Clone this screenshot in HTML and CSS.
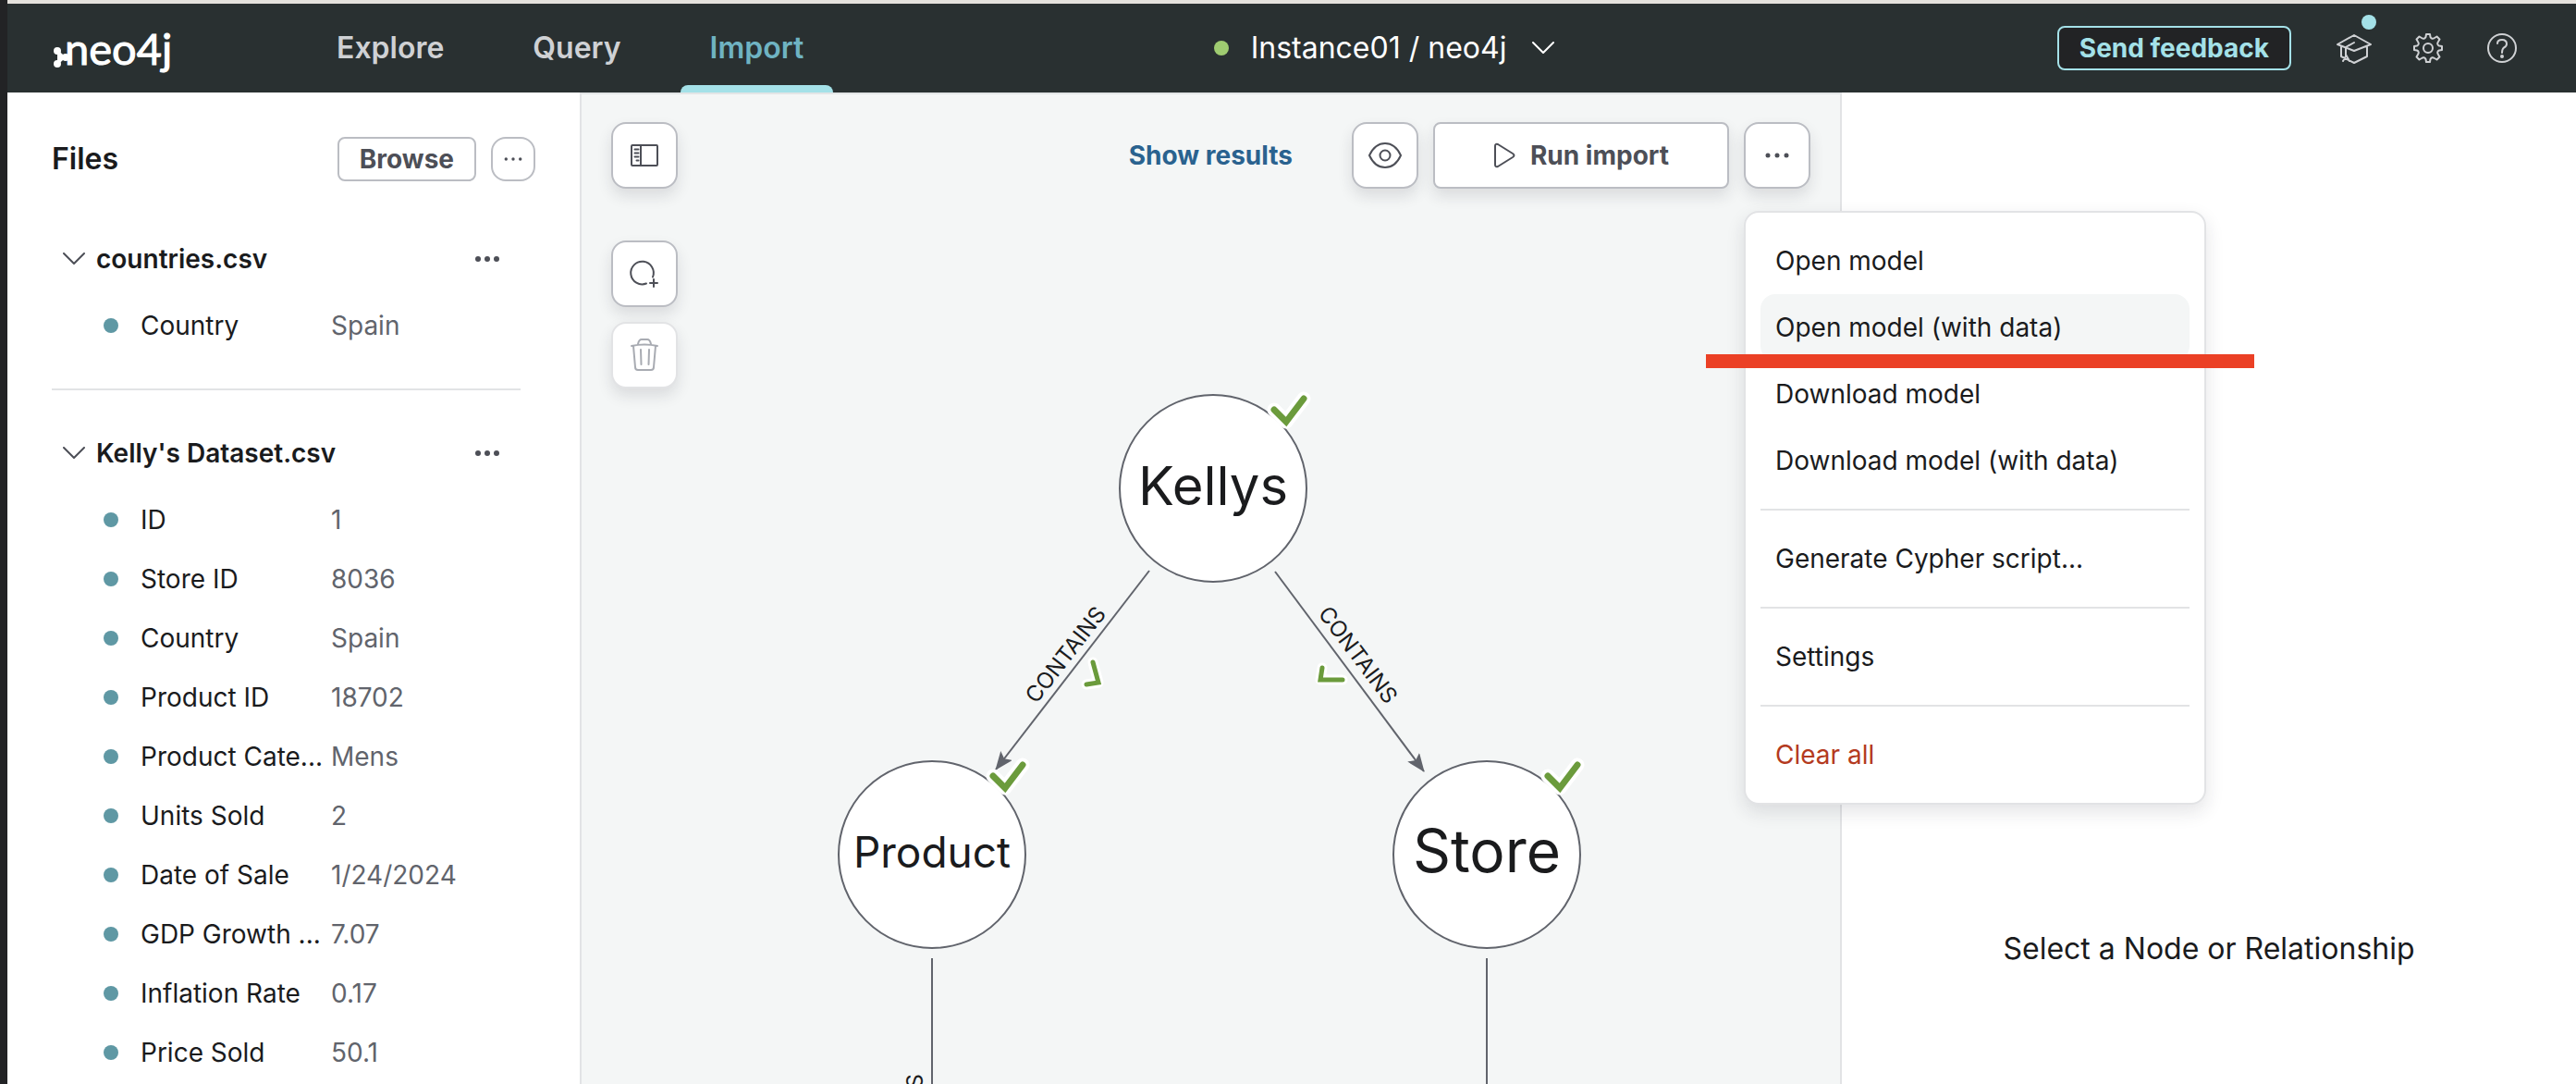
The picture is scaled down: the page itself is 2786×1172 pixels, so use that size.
FILE: index.html
```html
<!DOCTYPE html>
<html lang="en">
<head>
<meta charset="utf-8">
<title>neo4j Import</title>
<link rel="stylesheet" href="styles.css">
</head>
<body>
<header class="topbar">
  <a class="logo" href="#" aria-label="neo4j">
    <svg class="logo-mark" viewBox="0 0 20 64" aria-hidden="true"><path d="M6 35L14 42L6 49" /><circle cx="6" cy="35" r="3"/><circle cx="15" cy="42" r="3"/><circle cx="6" cy="49" r="3"/></svg>
    <span class="logo-text">neo4j</span>
  </a>
  <nav class="tabs">
    <a class="tab" href="#">Explore</a>
    <a class="tab" href="#">Query</a>
    <a class="tab tab-active" href="#" aria-current="page">Import</a>
  </nav>
  <button class="instance" type="button">
    <span class="status-dot"></span>
    <span>Instance01 / neo4j</span>
    <svg class="chevron" viewBox="0 0 24 14" aria-hidden="true"><path d="M1 1L12 12L23 1"/></svg>
  </button>
  <div class="tools">
    <button class="feedback" type="button">Send feedback</button>
    <button class="tool" type="button" aria-label="Learn">
      <svg viewBox="0 0 40 40" aria-hidden="true"><path d="M2 16L20 6L38 16L20 23ZM6 18L6 29L20 36L34 29L34 18M20 14L11 19L11 29L8 34M11 27L15 34"/></svg>
      <span class="badge"></span>
    </button>
    <button class="tool" type="button" aria-label="Settings">
      <svg viewBox="0 0 40 40" aria-hidden="true"><circle cx="20" cy="20" r="5"/><path d="M17.500 8L18 5L22 5L22.500 8Q24 11 27 9L29.500 7.500L32.500 10.500L31 13Q29 16 32 17.500L35 18L35 22L32 22.500Q29 24 31 27L32.500 29.500L29.500 32.500L27 31Q24 29 22.500 32L22 35L18 35L17.500 32Q16 29 13 31L10.500 32.500L7.500 29.500L9 27Q11 24 8 22.500L5 22L5 18L8 17.500Q11 16 9 13L7.500 10.500L10.500 7.500L13 9Q16 11 17.500 8Z"/></svg>
    </button>
    <button class="tool" type="button" aria-label="Help">
      <svg viewBox="0 0 40 40" aria-hidden="true"><circle cx="20" cy="20" r="15"/><path d="M15 15Q15 11 20 11Q25 11 25 15.500Q25 18 22 19.500Q20 21 20 25"/><circle class="fill" cx="20" cy="29" r="1"/></svg>
    </button>
  </div>
</header>

<div class="workspace">
  <aside class="files">
    <div class="files-head">
      <h1 class="files-title">Files</h1>
      <button class="btn btn-small" type="button">Browse</button>
      <button class="btn btn-dots" type="button" aria-label="More file actions"><svg class="dots dots-small" viewBox="0 0 28 8" aria-hidden="true"><circle cx="5" cy="4" r="2"/><circle cx="14" cy="4" r="2"/><circle cx="23" cy="4" r="2"/></svg></button>
    </div>
    <div class="file-list">
      <section class="file">
        <div class="file-head">
          <svg class="chevron" viewBox="0 0 24 14" aria-hidden="true"><path d="M1 1L12 12L23 1"/></svg>
          <h2 class="file-name">countries.csv</h2>
          <button class="plain" type="button" aria-label="File actions"><svg class="dots" viewBox="0 0 28 8" aria-hidden="true"><circle cx="4" cy="4" r="3"/><circle cx="14" cy="4" r="3"/><circle cx="24" cy="4" r="3"/></svg></button>
        </div>
        <dl class="fields">
          <div class="field"><dt>Country</dt><dd>Spain</dd></div>
        </dl>
      </section>
      <section class="file">
        <div class="file-head">
          <svg class="chevron" viewBox="0 0 24 14" aria-hidden="true"><path d="M1 1L12 12L23 1"/></svg>
          <h2 class="file-name">Kelly's Dataset.csv</h2>
          <button class="plain" type="button" aria-label="File actions"><svg class="dots" viewBox="0 0 28 8" aria-hidden="true"><circle cx="4" cy="4" r="3"/><circle cx="14" cy="4" r="3"/><circle cx="24" cy="4" r="3"/></svg></button>
        </div>
        <dl class="fields">
          <div class="field"><dt>ID</dt><dd>1</dd></div>
          <div class="field"><dt>Store ID</dt><dd>8036</dd></div>
          <div class="field"><dt>Country</dt><dd>Spain</dd></div>
          <div class="field"><dt>Product ID</dt><dd>18702</dd></div>
          <div class="field"><dt>Product Cate...</dt><dd>Mens</dd></div>
          <div class="field"><dt>Units Sold</dt><dd>2</dd></div>
          <div class="field"><dt>Date of Sale</dt><dd>1/24/2024</dd></div>
          <div class="field"><dt>GDP Growth ...</dt><dd>7.07</dd></div>
          <div class="field"><dt>Inflation Rate</dt><dd>0.17</dd></div>
          <div class="field"><dt>Price Sold</dt><dd>50.1</dd></div>
        </dl>
      </section>
    </div>
  </aside>

  <main class="canvas">
    <svg class="graph" role="img" aria-label="Graph model">
      <defs>
        <marker id="arrow" viewBox="0 0 20 16" refX="19" refY="8" markerWidth="20" markerHeight="16" markerUnits="userSpaceOnUse" orient="auto"><path class="arrow-head" d="M20 8L0 0L4 8L0 16Z"/></marker>
      </defs>
      <path class="edge" marker-end="url(#arrow)" d="M614 517L448 732"/>
      <path class="edge" marker-end="url(#arrow)" d="M750 518L911 734"/>
      <path class="edge" d="M379 936V1400M979 936V1400"/>
      <text class="edge-label" transform="translate(530 613) rotate(-52)">CONTAINS</text>
      <text class="edge-label" transform="translate(833 613) rotate(53)">CONTAINS</text>
      <text class="edge-label edge-label-end" transform="translate(369 1061) rotate(-90)">CONTAINS</text>
      <circle class="node" cx="683" cy="428" r="101"/>
      <circle class="node" cx="379" cy="824" r="101"/>
      <circle class="node" cx="979" cy="824" r="101"/>
      <text class="node-label size-m" x="683" y="446">Kellys</text>
      <text class="node-label size-s" x="379" y="838">Product</text>
      <text class="node-label size-l" x="979" y="843">Store</text>
      <path class="halo" d="M749 343L762 356L781 331M445 739L458 752L477 727M1045 739L1058 752L1077 727"/>
      <path class="check" d="M749 343L762 356L781 331M445 739L458 752L477 727M1045 739L1058 752L1077 727"/>
      <path class="halo halo-small" d="M553 616L559 638L546 640M801 622L799 635L823 635"/>
      <path class="check check-small" d="M553 616L559 638L546 640M801 622L799 635L823 635"/>
    </svg>
    <div class="canvas-tools">
      <button class="btn btn-icon" type="button" aria-label="Toggle files panel"><svg class="icon" viewBox="0 0 32 32" aria-hidden="true"><rect x="2" y="5" width="28" height="22" rx="1"/><path d="M12 5V27M5.500 9.500H9.500M5.500 13.500H9.500M5.500 17.500H9.500M7.500 21.500H9.500"/></svg></button>
      <div class="tool-group">
        <button class="btn btn-icon" type="button" aria-label="Add node"><svg class="icon" viewBox="0 0 32 32" aria-hidden="true"><path d="M18 26.500A12.300 12.300 0 1 1 25 19.500M26 22V30M22 26H30"/></svg></button>
        <button class="btn btn-icon btn-off" type="button" aria-label="Delete" disabled><svg class="icon" viewBox="0 0 32 32" aria-hidden="true"><path d="M2 6Q16 3 30 6M4 6L6 29Q6 32 9 32H23Q26 32 26 29L28 6M9 4Q10-1 13-1H19Q22-1 23 4M12 10L12.500 26M21 10L20.500 26"/></svg></button>
      </div>
    </div>
    <div class="actions">
      <a class="results" href="#">Show results</a>
      <button class="btn btn-icon" type="button" aria-label="Preview"><svg class="icon icon-wide" viewBox="0 0 36 32" aria-hidden="true"><path d="M1 16Q7 3 18 3T35 16Q29 29 18 29T1 16Z"/><circle cx="18" cy="16" r="5.500"/></svg></button>
      <button class="btn btn-run" type="button"><svg class="icon-play" viewBox="0 0 24 28" aria-hidden="true"><path d="M2 4Q2 1 5 2L21 12Q24 14 21 16L5 26Q2 27 2 24Z"/></svg>Run import</button>
      <div class="menu-anchor">
        <button class="btn btn-icon" type="button" aria-label="More actions" aria-expanded="true"><svg class="dots" viewBox="0 0 28 8" aria-hidden="true"><circle cx="4" cy="4" r="2.500"/><circle cx="14" cy="4" r="2.500"/><circle cx="24" cy="4" r="2.500"/></svg></button>
        <div class="menu">
          <button class="item" type="button">Open model</button>
          <button class="item item-hover" type="button">Open model (with data)</button>
          <button class="item" type="button">Download model</button>
          <button class="item" type="button">Download model (with data)</button>
          <hr class="rule">
          <button class="item" type="button">Generate Cypher script...</button>
          <hr class="rule">
          <button class="item" type="button">Settings</button>
          <hr class="rule">
          <button class="item item-danger" type="button">Clear all</button>
          <span class="marker-bar"></span>
        </div>
      </div>
    </div>
  </main>

  <aside class="details"><p class="hint">Select a Node or Relationship</p></aside>
</div>
</body>
</html>
```
FILE: styles.css
```css
* { box-sizing: border-box; }
body {
  margin: 0;
  display: flex;
  flex-direction: column;
  overflow: hidden;
  height: 100vh;
  border-left: 8px solid #222325;
  background: #fff;
  color: #1a1b1d;
  font: 400 28px/40px Inter, "Liberation Sans", sans-serif;
}
button { font: inherit; color: inherit; margin: 0; padding: 0; border: 0; background: none; cursor: pointer; }
a { text-decoration: none; color: inherit; }
h1, h2, p, dl, dt, dd { margin: 0; }
svg { display: block; fill: none; stroke: currentColor; stroke-width: 2; stroke-linecap: round; stroke-linejoin: round; }

/* Top bar */
.topbar {
  flex: none;
  height: 100px;
  border-top: 4px solid #e5e2dd;
  display: flex;
  align-items: center;
  padding: 0 60px 0 48px;
  background: #293031;
  color: #cfd1d4;
}
.logo { display: flex; align-items: center; width: 308px; color: #fff; }
.logo-mark { width: 20px; height: 64px; fill: currentColor; margin-right: -6px; }
.logo-text { font: 400 47px/64px Lato, sans-serif; -webkit-text-stroke: 1px currentColor; }
.tabs { display: flex; gap: 96px; }
.tab { position: relative; display: flex; align-items: center; height: 96px; font-size: 32px; font-weight: 600; }
.tab-active { color: #6fb3c2; }
.tab-active::after { content: ""; position: absolute; left: -32px; right: -32px; bottom: 0; height: 8px; border-radius: 8px 8px 0 0; background: #a4e1e8; }
.instance { display: flex; align-items: center; gap: 24px; margin: 0 auto; padding-right: 100px; font-size: 32px; color: #fff; }
.status-dot { width: 16px; height: 16px; border-radius: 50%; background: #9fcc71; }
.chevron { width: 24px; height: 14px; flex: none; }
.instance .chevron { margin-left: 4px; }
.tools { display: flex; align-items: center; gap: 40px; }
.feedback { height: 48px; padding: 0 22px; margin-right: 8px; border: 2px solid #a4e1e8; border-radius: 8px; background: #222325; color: #a4e1e8; font-weight: 700; }
.tool { position: relative; }
.tool svg { width: 40px; height: 40px; }
.tool .fill { fill: currentColor; }
.badge { position: absolute; top: -16px; right: -4px; width: 16px; height: 16px; border-radius: 50%; background: #a4e1e8; }

/* Files panel */
.workspace { flex: 1; display: flex; min-height: 0; }
.files { flex: none; width: 621px; padding: 48px 48px 0; border-right: 2px solid #e2e3e5; overflow: hidden; }
.files-head { display: flex; align-items: center; gap: 16px; height: 48px; }
.files-title { flex: 1; font-size: 32px; line-height: 48px; font-weight: 600; }
.btn { display: flex; align-items: center; justify-content: center; border: 2px solid #bbbdc3; background: #fff; color: #4d4f57; font-weight: 700; }
.btn-small { height: 48px; padding: 0 22px; border-radius: 8px; }
.btn-dots { width: 48px; height: 48px; border-radius: 16px; }
.dots { width: 28px; height: 8px; fill: currentColor; stroke: none; }
.dots-small { width: 24px; }
.file-list { margin-right: 16px; padding-top: 16px; }
.file { padding: 48px 0 36px; }
.file + .file { border-top: 2px solid #e2e3e5; }
.file-head { display: flex; align-items: center; gap: 12px; height: 40px; padding: 0 22px 0 12px; color: #4d4f57; }
.file-name { flex: 1; font-size: 28px; font-weight: 600; color: #1a1b1d; }
.fields { padding-top: 20px; }
.field { display: flex; align-items: center; height: 64px; padding-left: 56px; }
.field::before { content: ""; width: 16px; height: 16px; border-radius: 50%; background: #5f98a4; margin-right: 24px; }
.field dt { width: 206px; white-space: nowrap; }
.field dd { color: #61646c; }

/* Graph canvas */
.canvas { position: relative; flex: 1; min-width: 0; display: flex; justify-content: space-between; align-items: flex-start; padding: 32px; background: #f4f6f6; box-shadow: inset 0 2px #e2e5e6; }
.graph { position: absolute; left: 0; top: 0; width: 100%; height: 100%; color: #61646c; }
.edge { stroke-linecap: butt; }
.arrow-head { fill: #61646c; stroke: none; }
.edge-label { font-size: 24px; fill: #1a1b1d; stroke: none; text-anchor: middle; }
.edge-label-end { text-anchor: end; }
.node { fill: #fff; }
.node-label { fill: #1a1b1d; stroke: none; text-anchor: middle; }
.size-s { font-size: 46px; }
.size-m { font-size: 58px; }
.size-l { font-size: 64px; }
.halo { stroke: #fff; stroke-width: 15; }
.check { stroke: #6b9b3c; stroke-width: 7; stroke-linejoin: miter; }
.halo-small { stroke-width: 11; }
.check-small { stroke-width: 5; }

.canvas-tools, .tool-group { position: relative; display: flex; flex-direction: column; gap: 16px; }
.canvas-tools { gap: 56px; }
.btn-icon { width: 72px; height: 72px; border-radius: 16px; }
.btn-icon, .btn-run { box-shadow: 0 8px 16px rgba(30, 35, 50, 0.12); }
.btn-off { border-color: #e2e3e5; color: #a8abb2; }
.icon { width: 32px; height: 32px; overflow: visible; }
.icon-wide { width: 36px; }
.actions { position: relative; display: flex; align-items: center; gap: 16px; }
.results { margin-right: 48px; color: #2a628f; font-weight: 700; }
.btn-run { width: 320px; height: 72px; gap: 16px; border-radius: 8px; }
.icon-play { width: 24px; height: 28px; }

/* Actions menu */
.menu-anchor { position: relative; }
.menu { position: absolute; left: 0; top: 96px; z-index: 2; width: 500px; padding: 16px; border: 2px solid #e2e3e5; border-radius: 16px; background: #fff; box-shadow: 0 8px 20px rgba(30, 35, 50, 0.12); }
.item { display: block; width: 100%; height: 72px; padding: 0 16px; border-radius: 16px; text-align: left; white-space: nowrap; }
.item-hover { background: #f4f6f6; }
.item-danger { color: #b43a20; }
.rule { height: 2px; margin: 16px 0; border: 0; background: #e2e3e5; }
.marker-bar { position: absolute; left: -43px; right: -54px; top: 153px; height: 15px; background: #eb4025; }

/* Details panel */
.details { flex: none; width: 796px; padding-top: 906px; border-left: 2px solid #e2e3e5; background: #fff; text-align: center; font-size: 32px; }
```
